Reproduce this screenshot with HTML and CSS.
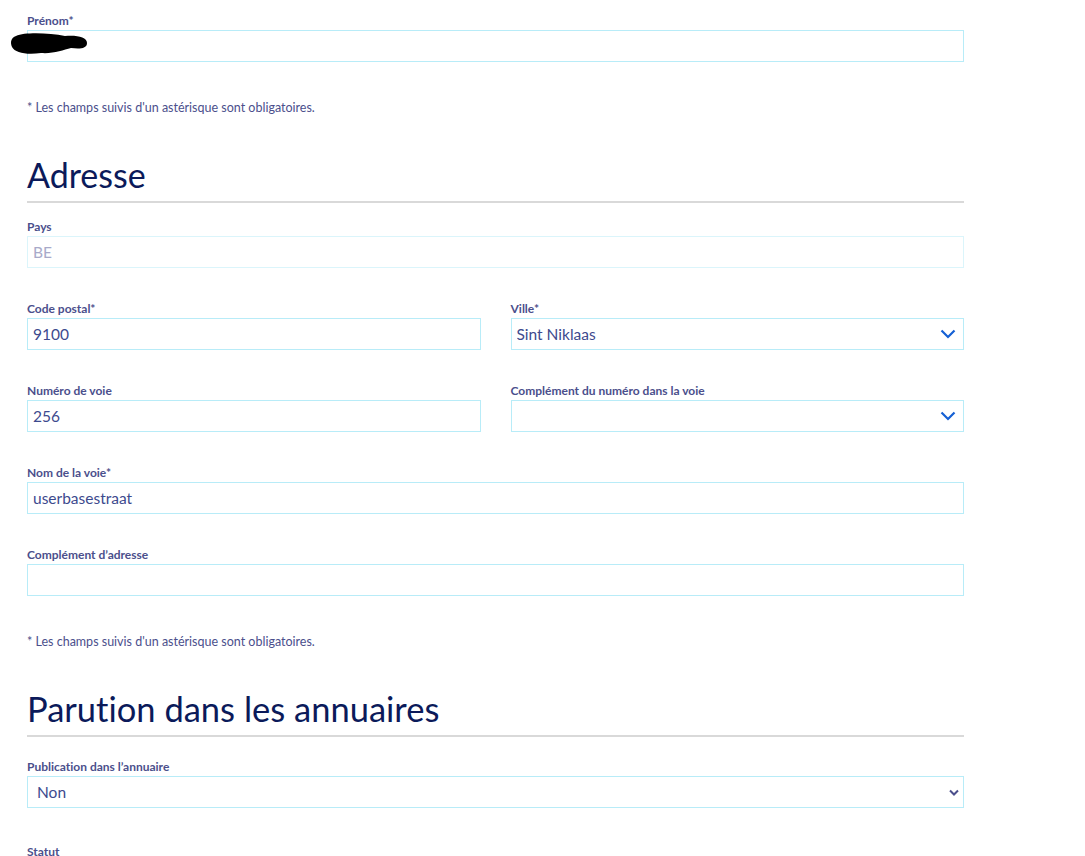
FILE: index.html
```html
<!DOCTYPE html>
<html lang="fr">
<head>
    <meta charset="UTF-8">
    <meta name="viewport" content="width=device-width, initial-scale=1.0">
    <title>Mes informations</title>
    <link rel="stylesheet" href="styles.css">
</head>
<body>
    <div class="page">

        <!-- Identité -->
        <div class="field">
            <label for="prenom">Prénom*</label>
            <div class="control">
                <input type="text" id="prenom" class="input" value="">
                <svg class="redacted" width="80" height="26" viewBox="0 0 80 26">
                    <path d="M7 5 C16 1 40 2 56 5 C68 4 78 6 78 12 C78 18 70 18 62 17 C54 19 44 23 32 22 C18 24 6 22 3 16 C1 11 2 7 7 5 Z" fill="#000"/>
                </svg>
            </div>
        </div>
        <p class="note">* Les champs suivis d'un astérisque sont obligatoires.</p>

        <!-- Adresse -->
        <h2 class="section-title">Adresse</h2>

        <div class="field">
            <label for="pays">Pays</label>
            <input type="text" id="pays" class="input" value="BE" disabled>
        </div>

        <div class="row">
            <div class="field">
                <label for="cp">Code postal*</label>
                <input type="text" id="cp" class="input" value="9100">
            </div>
            <div class="field">
                <label for="ville">Ville*</label>
                <div class="control">
                    <select id="ville" class="input select">
                        <option>Sint Niklaas</option>
                    </select>
                    <svg class="chevron" width="16" height="10" viewBox="0 0 16 10">
                        <path d="M1.5 1.5 L8 8 L14.5 1.5" fill="none" stroke="#1560d4" stroke-width="2.2"/>
                    </svg>
                </div>
            </div>
        </div>

        <div class="row">
            <div class="field">
                <label for="numero">Numéro de voie</label>
                <input type="text" id="numero" class="input" value="256">
            </div>
            <div class="field">
                <label for="complement-num">Complément du numéro dans la voie</label>
                <div class="control">
                    <select id="complement-num" class="input select">
                        <option></option>
                    </select>
                    <svg class="chevron" width="16" height="10" viewBox="0 0 16 10">
                        <path d="M1.5 1.5 L8 8 L14.5 1.5" fill="none" stroke="#1560d4" stroke-width="2.2"/>
                    </svg>
                </div>
            </div>
        </div>

        <div class="field">
            <label for="voie">Nom de la voie*</label>
            <input type="text" id="voie" class="input" value="userbasestraat">
        </div>

        <div class="field">
            <label for="complement">Complément d’adresse</label>
            <input type="text" id="complement" class="input" value="">
        </div>
        <p class="note">* Les champs suivis d'un astérisque sont obligatoires.</p>

        <!-- Annuaires -->
        <h2 class="section-title section-title-wide">Parution dans les annuaires</h2>

        <div class="field field-loose">
            <label for="publication">Publication dans l’annuaire</label>
            <div class="control">
                <select id="publication" class="input select select-small">
                    <option>Non</option>
                </select>
                <svg class="chevron chevron-small" width="10" height="7" viewBox="0 0 10 7">
                    <path d="M1 1.5 L5 5.5 L9 1.5" fill="none" stroke="#4b4f8c" stroke-width="2"/>
                </svg>
            </div>
        </div>

        <div class="field">
            <label for="statut">Statut</label>
        </div>
    </div>
</body>
</html>
```

FILE: styles.css
```css
body {
    margin: 0;
    background-color: #fff;
    font-family: Lato, "Liberation Sans", sans-serif;
    font-variant-ligatures: none;
    color: #4b4f8c;
}

.page {
    width: 937px;
    padding: 13px 0 0 27px;
}

.field {
    margin-bottom: 33px;
}

.field-loose {
    margin-bottom: 36px;
}

.field label {
    display: block;
    font-size: 12px;
    font-weight: bold;
    line-height: 16px;
    margin-bottom: 1px;
    color: #4b4f8c;
}

.control {
    position: relative;
}

.input {
    display: block;
    box-sizing: border-box;
    width: 100%;
    height: 32px;
    padding: 0 5px;
    border: 1px solid #b8ecf8;
    border-radius: 0;
    background-color: #fff;
    font-family: Lato, "Liberation Sans", sans-serif;
    font-size: 15.5px;
    color: #3d4a8e;
    outline: none;
}

.input:disabled {
    color: #a8a9c9;
    border-color: #dbf5fb;
}

.select {
    appearance: none;
    -webkit-appearance: none;
    padding-right: 30px;
}

.select-small {
    padding-left: 9px;
}

.chevron {
    position: absolute;
    right: 8px;
    top: 11px;
    pointer-events: none;
}

.chevron-small {
    right: 5px;
    top: 13px;
}

.redacted {
    position: absolute;
    left: -18px;
    top: 1px;
}

.row {
    display: grid;
    grid-template-columns: 1fr 1fr;
    column-gap: 30px;
}

.note {
    margin: 38px 0 0;
    font-size: 12.5px;
    line-height: 16px;
    color: #4b4f8c;
}

.section-title {
    margin: 37px 0 16px;
    padding-bottom: 4px;
    border-bottom: 2px solid #d9d9d9;
    font-size: 34px;
    font-weight: normal;
    line-height: 44px;
    color: #0b1a5a;
}

.section-title-wide {
    font-size: 34.5px;
    margin-bottom: 22px;
}
```
